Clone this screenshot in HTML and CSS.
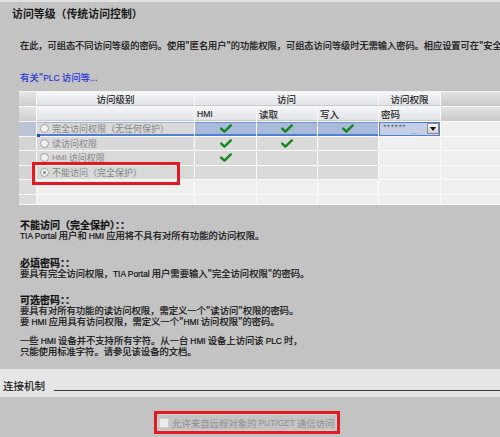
FILE: index.html
```html
<!DOCTYPE html>
<html lang="zh-CN">
<head>
<meta charset="utf-8">
<link rel="stylesheet" href="styles.css">
</head>
<body>
<div class="page">
  <section class="access">
    <h1 class="title">访问等级（传统访问控制）</h1>
    <p class="intro">在此，可组态不同访问等级的密码。使用"匿名用户"的功能权限，可组态访问等级时无需输入密码。相应设置可在"安全特性"中找到。</p>
    <a class="more">有关"<span class="lat">PLC</span> 访问等...</a>
    <div class="table-wrap">
      <div class="grid">
        <div class="c gh"></div>
        <div class="c h center">访问级别</div>
        <div class="c h center span3">访问</div>
        <div class="c h center">访问权限</div>
        <div class="c h7"></div>

        <div class="c gh"></div>
        <div class="c h"></div>
        <div class="c h"><span class="lat">HMI</span></div>
        <div class="c h">读取</div>
        <div class="c h">写入</div>
        <div class="c h">密码</div>
        <div class="c h7"></div>

        <div class="c g gsel"></div>
        <div class="c name sel"><span class="radio"></span>完全访问权限（无任何保护）<span class="handle"></span></div>
        <div class="c ck selb"><svg class="check" viewBox="0 0 12 9"><path d="M1.2 4.6 L4.4 7.6 L10.8 1.4"/></svg></div>
        <div class="c ck selb"><svg class="check" viewBox="0 0 12 9"><path d="M1.2 4.6 L4.4 7.6 L10.8 1.4"/></svg></div>
        <div class="c ck selb"><svg class="check" viewBox="0 0 12 9"><path d="M1.2 4.6 L4.4 7.6 L10.8 1.4"/></svg></div>
        <div class="c pwd"><span class="stars">******</span><span class="dots">...</span><span class="drop"><span class="tri"></span></span></div>
        <div class="c e"></div>

        <div class="c g"></div>
        <div class="c name"><span class="radio"></span>读访问权限</div>
        <div class="c ck"><svg class="check" viewBox="0 0 12 9"><path d="M1.2 4.6 L4.4 7.6 L10.8 1.4"/></svg></div>
        <div class="c ck"><svg class="check" viewBox="0 0 12 9"><path d="M1.2 4.6 L4.4 7.6 L10.8 1.4"/></svg></div>
        <div class="c ck"></div>
        <div class="c e"></div>
        <div class="c e"></div>

        <div class="c g"></div>
        <div class="c name"><span class="radio"></span><span class="lat">HMI</span>&nbsp;访问权限</div>
        <div class="c ck"><svg class="check" viewBox="0 0 12 9"><path d="M1.2 4.6 L4.4 7.6 L10.8 1.4"/></svg></div>
        <div class="c ck"></div>
        <div class="c ck"></div>
        <div class="c e"></div>
        <div class="c e"></div>

        <div class="c g"></div>
        <div class="c name"><span class="radio on"></span>不能访问（完全保护）</div>
        <div class="c ck"></div>
        <div class="c ck"></div>
        <div class="c ck"></div>
        <div class="c e"></div>
        <div class="c e"></div>

        <div class="c g2"></div>
        <div class="c e"></div>
        <div class="c e"></div>
        <div class="c e"></div>
        <div class="c e"></div>
        <div class="c e"></div>
        <div class="c e"></div>

        <div class="c g2"></div>
        <div class="c e"></div>
        <div class="c e"></div>
        <div class="c e"></div>
        <div class="c e"></div>
        <div class="c e"></div>
        <div class="c e"></div>
      </div>
      <div class="hl-box"></div>
    </div>

    <div class="desc">
      <div class="block">
        <div class="bt">不能访问（完全保护）：：</div>
        <div class="ln"><span class="lat">TIA Portal</span> 用户和 <span class="lat">HMI</span> 应用将不具有对所有功能的访问权限。</div>
      </div>
      <div class="block b2">
        <div class="bt">必填密码：：</div>
        <div class="ln">要具有完全访问权限，<span class="lat">TIA Portal</span> 用户需要输入"完全访问权限"的密码。</div>
      </div>
      <div class="block b3">
        <div class="bt">可选密码：：</div>
        <div class="ln">要具有对所有功能的读访问权限，需定义一个"读访问"权限的密码。</div>
        <div class="ln">要 <span class="lat">HMI</span> 应用具有访问权限，需定义一个"<span class="lat">HMI</span> 访问权限"的密码。</div>
      </div>
      <div class="block b4">
        <div class="ln">一些 <span class="lat">HMI</span> 设备并不支持所有字符。从一台 <span class="lat">HMI</span> 设备上访问该 <span class="lat">PLC</span> 时，</div>
        <div class="ln">只能使用标准字符。请参见该设备的文档。</div>
      </div>
    </div>
  </section>

  <section class="conn">
    <div class="conn-head"><span class="conn-title">连接机制</span><span class="rule"></span></div>
    <div class="conn-body">
      <label class="putget"><span class="cb"></span>允许来自远程对象的 <span class="lat">PUT/GET</span> 通信访问</label>
    </div>
  </section>
</div>
</body>
</html>
```

FILE: styles.css
```css
html, body {
  margin: 0;
  padding: 0;
}
body {
  width: 500px;
  height: 437px;
  overflow: hidden;
  background: #c3c3c3;
  font-family: "Noto Sans CJK SC", "Noto Sans", sans-serif;
  color: #151515;
}
.page {
  width: 500px;
  height: 437px;
  overflow: hidden;
  display: flex;
  flex-direction: column;
}
.lat {
  font-family: "Liberation Sans", "DejaVu Sans", sans-serif;
  font-size: 0.9em;
}
.access {
  border-top: 2px solid #e2e2e2;
  height: 367px;
  display: flex;
  flex-direction: column;
}
.title {
  margin: 4px 0 0 12px;
  font-size: 10.9px;
  line-height: 14px;
  font-weight: bold;
  color: #1a1a1a;
}
.intro {
  margin: 19px 0 0 20px;
  font-size: 9.2px;
  line-height: 12px;
  white-space: nowrap;
  overflow: hidden;
  color: #111;
  -webkit-text-stroke: 0.2px #111;
}
.more {
  margin: 20px 0 0 20px;
  font-size: 9.4px;
  line-height: 12px;
  color: #2233dd;
  display: block;
  -webkit-text-stroke: 0.15px #2233dd;
}
.table-wrap {
  position: relative;
  margin: 7px 0 0 19px;
}
.grid {
  display: grid;
  grid-template-columns: 17px 157px 61px 60px 60px 61px 1fr;
  grid-template-rows: 14px 14px 13.5px 13.5px 13.5px 13.5px 13.5px 9.5px;
  gap: 1px;
  background: #fafafa;
  border-top: 1px solid #f2f2f2;
  border-bottom: 1px solid #f4f4f4;
}
.c {
  font-size: 9.5px;
  line-height: 13px;
  white-space: nowrap;
  overflow: hidden;
  display: flex;
  align-items: center;
}
.h {
  background: linear-gradient(#f4f6f8, #dfe2e6);
  color: #1c1c1c;
  padding-left: 2px;
  box-shadow: inset 0 -1px #c8ccd0;
  -webkit-text-stroke: 0.15px #1c1c1c;
}
.center {
  justify-content: center;
  padding-left: 0;
}
.span3 {
  grid-column: span 3;
}
.gh {
  background: linear-gradient(#e6e6e6, #cdcdcd);
}
.h7 {
  background: linear-gradient(#e2e2e2, #c9c9c9);
}
.g {
  background: #d4d4d4;
}
.g2 {
  background: #dcdcdc;
}
.gsel {
  background: #b9c4d6;
}
.name {
  background: #d9d9d9;
  color: #848484;
  font-size: 9px;
  padding-left: 3px;
  position: relative;
  overflow: visible;
}
.sel {
  box-shadow: inset 0 1px #9fb3d8, inset 0 -2px #4f7fd0;
}
.handle {
  position: absolute;
  left: 0;
  bottom: -1px;
  width: 3px;
  height: 3px;
  background: #1f4fd0;
}
.radio {
  width: 9px;
  height: 9px;
  border-radius: 50%;
  border: 1px solid #a2a2a2;
  background: #f2f2f2;
  margin-right: 3px;
  box-sizing: border-box;
  flex: none;
  position: relative;
}
.radio.on::after {
  content: "";
  position: absolute;
  left: 2px;
  top: 2px;
  width: 3px;
  height: 3px;
  border-radius: 50%;
  background: #8a8a8a;
}
.ck {
  background: #dadada;
  justify-content: center;
}
.selb {
  background: #a9badb;
  box-shadow: inset 0 1px #6f93d2, inset 0 -2px #4f7fd0;
}
.check {
  width: 12px;
  height: 9px;
}
.check path {
  fill: none;
  stroke: #13881a;
  stroke-width: 2.4;
  stroke-linecap: round;
  stroke-linejoin: round;
}
.e {
  background: #efefef;
}
.pwd {
  background: #c4cfe6;
  box-shadow: inset 0 0 0 1px #4f7fd0;
  position: relative;
  padding-left: 4px;
}
.stars {
  font-family: "DejaVu Sans", sans-serif;
  font-size: 6.5px;
  letter-spacing: 0.6px;
  color: #333;
  line-height: 13px;
  margin-top: -2px;
}
.dots {
  font-family: "DejaVu Sans", sans-serif;
  font-size: 6px;
  color: #333;
  margin-left: 5px;
  margin-top: 5px;
}
.drop {
  position: absolute;
  right: 1px;
  top: 1px;
  width: 12px;
  height: 11px;
  box-sizing: border-box;
  border: 1px solid #8b8b8b;
  background: linear-gradient(#f6f6f6, #d0d0d0);
  display: flex;
  align-items: center;
  justify-content: center;
}
.tri {
  width: 0;
  height: 0;
  border-left: 3.5px solid transparent;
  border-right: 3.5px solid transparent;
  border-top: 4px solid #111;
}
.hl-box {
  position: absolute;
  left: 13px;
  top: 71px;
  width: 148px;
  height: 23px;
  box-sizing: border-box;
  border: 3px solid #e41a22;
}
.desc {
  margin: 13.5px 0 0 20px;
  font-size: 9.3px;
  line-height: 11px;
  color: #111;
  white-space: nowrap;
  -webkit-text-stroke: 0.2px #111;
}
.ln {
  height: 11px;
}
.bt {
  font-weight: bold;
  font-size: 10px;
  height: 11px;
}
.b2 {
  margin-top: 16px;
}
.b3 {
  margin-top: 15px;
}
.b4 {
  margin-top: 8px;
}
.conn {
  flex: 1;
  display: flex;
  flex-direction: column;
}
.conn-head {
  background: #e6e6e6;
  height: 28px;
  display: flex;
  align-items: flex-start;
  padding-left: 3px;
}
.conn-title {
  font-size: 10.5px;
  line-height: 14px;
  margin-top: 10px;
  color: #111;
  -webkit-text-stroke: 0.15px #111;
}
.rule {
  flex: 1;
  border-top: 1px solid #3a3a3a;
  margin: 21px 0 0 9px;
}
.conn-body {
  display: flex;
  padding: 14px 0 0 154px;
}
.putget {
  display: flex;
  align-items: center;
  width: 186px;
  height: 23px;
  box-sizing: border-box;
  border: 3px solid #e41a22;
  box-shadow: inset 0 0 0 1px #d2d2d2;
  padding-left: 2px;
  font-size: 9.4px;
  color: #8f8f8f;
  white-space: nowrap;
}
.putget .lat {
  margin: 0 2px;
}
.cb {
  width: 10px;
  height: 10px;
  box-sizing: border-box;
  border: 1px solid #cfcfcf;
  background: #ececec;
  margin-right: 3px;
  flex: none;
}
```
